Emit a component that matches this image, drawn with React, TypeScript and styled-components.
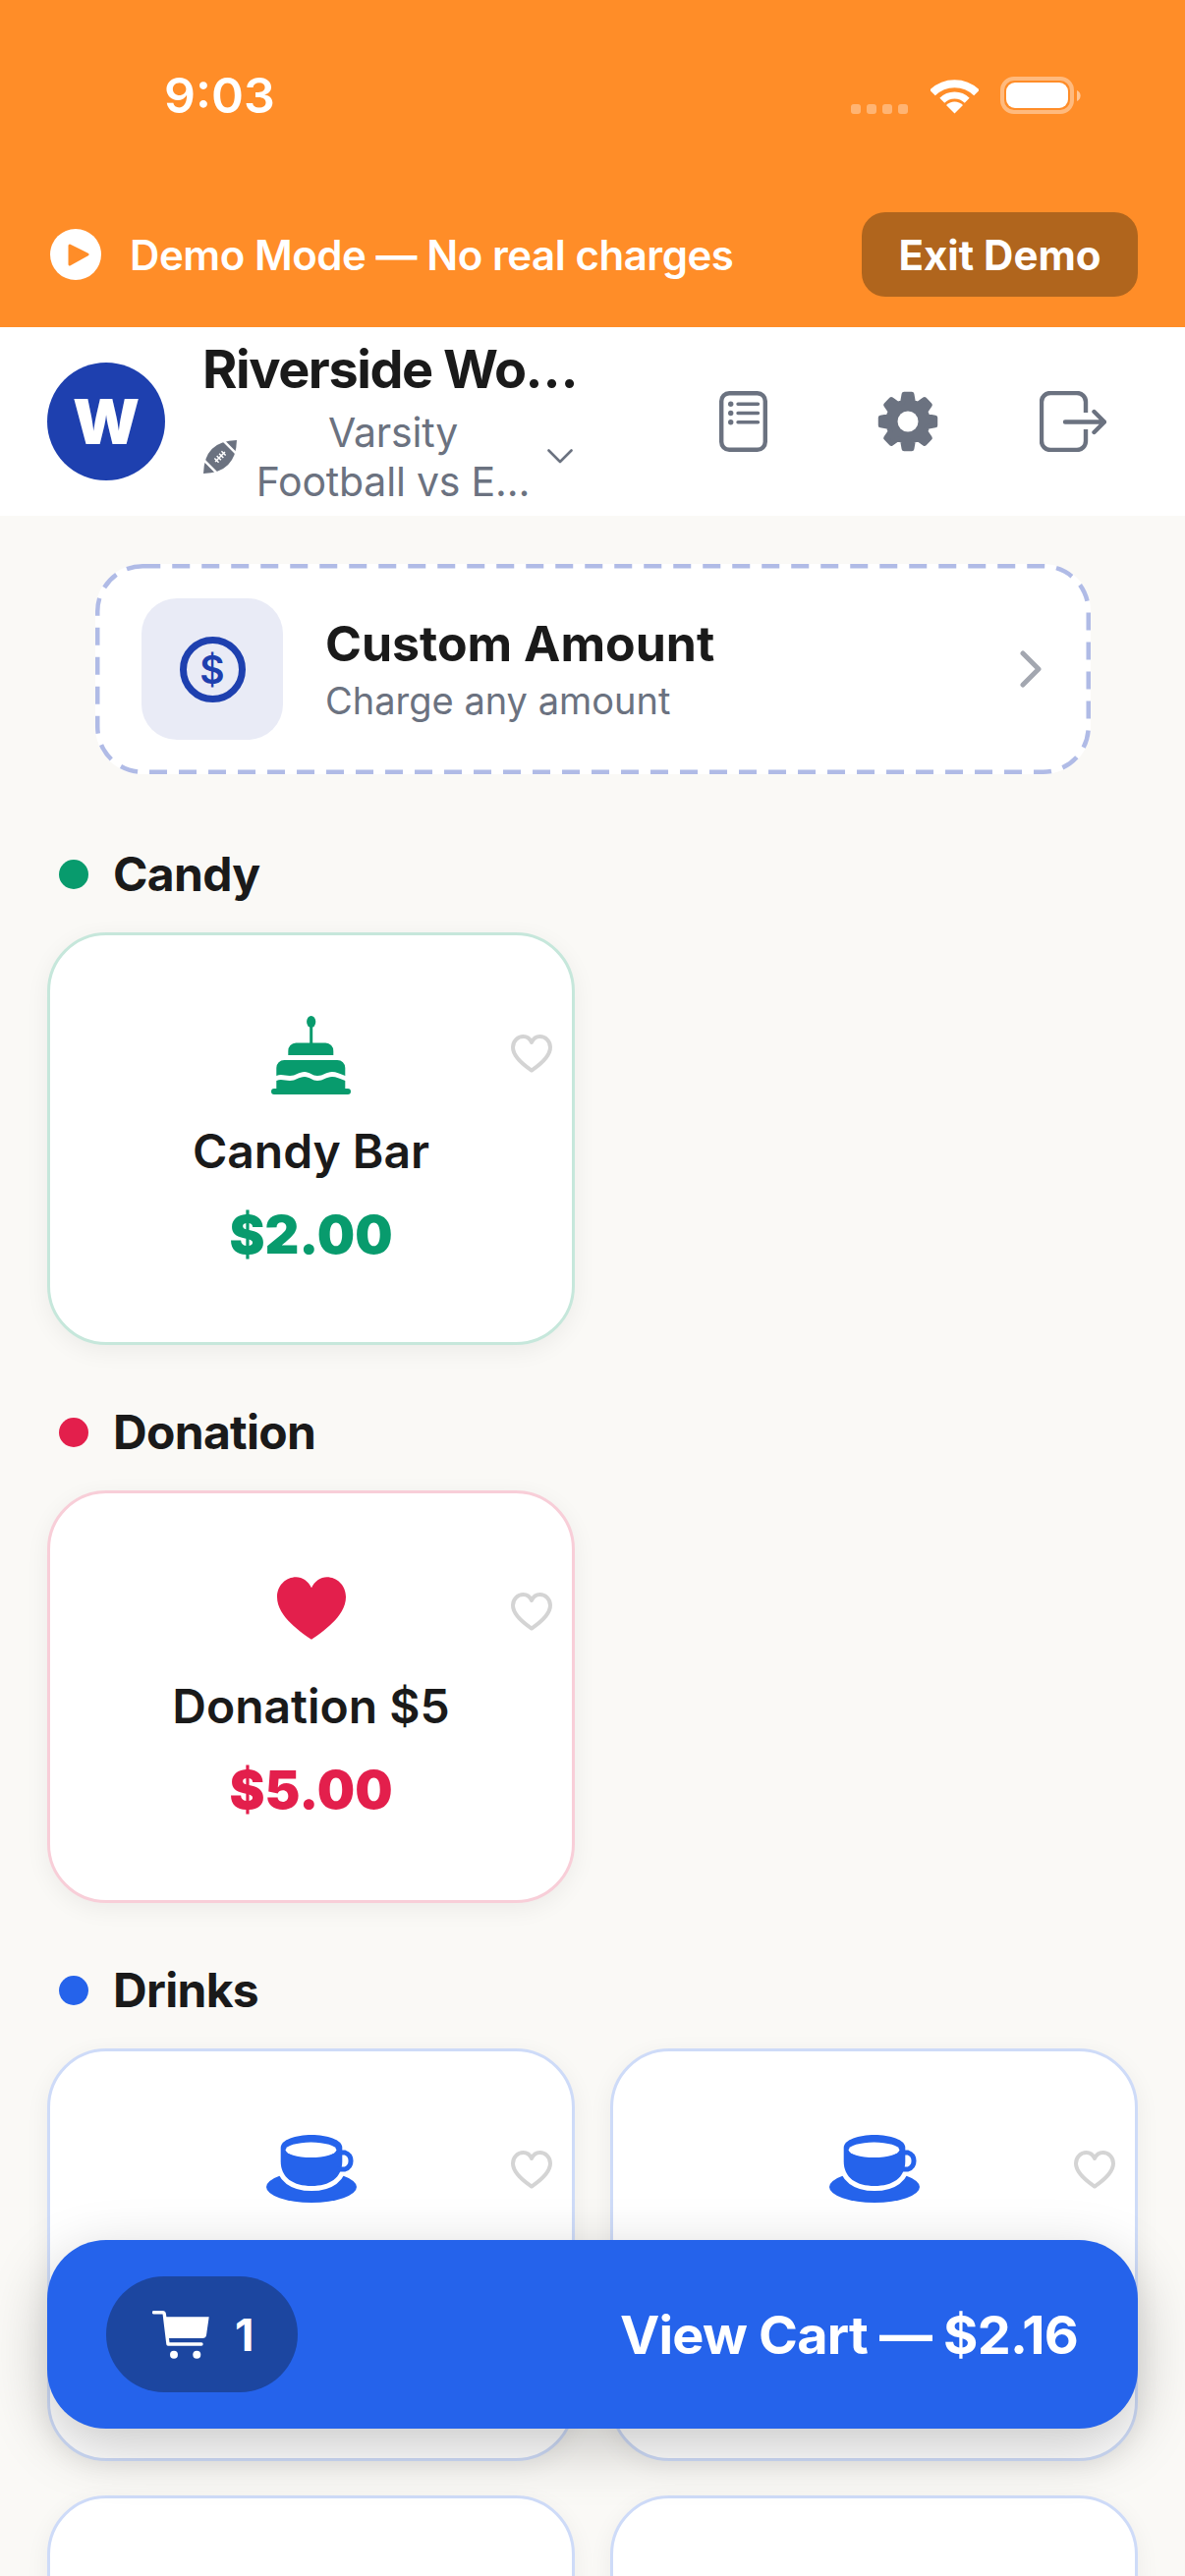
import React from 'react';
import styled, { createGlobalStyle } from 'styled-components';

const GlobalStyle = createGlobalStyle`
  html, body {
    margin: 0;
    padding: 0;
    background: #faf9f6;
    font-family: Inter, "Noto Sans", "Liberation Sans", sans-serif;
    color: #1a1a1a;
  }
  * {
    box-sizing: border-box;
  }
`;

const Screen = styled.div`
  position: relative;
  width: 1206px;
  height: 2622px;
  overflow: hidden;
  background: #faf9f6;
`;

const Banner = styled.div`
  height: 333px;
  padding-top: 71px;
  background: #ff8d28;
  color: #fff;
`;

const StatusRow = styled.div`
  display: flex;
  align-items: center;
  height: 52px;
  padding: 0 106px 0 167px;
`;

const Time = styled.div`
  flex: 1;
  font-size: 50px;
  line-height: 52px;
  font-weight: 600;
`;

const SignalDots = styled.div`
  display: flex;
  gap: 6px;
  align-self: flex-end;
  margin: 0 23px 7px 0;
`;

const SignalDot = styled.span`
  width: 10px;
  height: 10px;
  border-radius: 3px;
  background: rgba(255, 255, 255, 0.35);
`;

const StatusIcons = styled.div`
  display: flex;
  align-items: center;
  gap: 22px;
`;

const DemoRow = styled.div`
  display: flex;
  align-items: center;
  margin-top: 93px;
  padding: 0 48px 0 51px;
`;

const DemoLabel = styled.div`
  flex: 1;
  margin-left: 29px;
  font-size: 42px;
  font-weight: 600;
  letter-spacing: -0.45px;
`;

const ExitButton = styled.div`
  display: flex;
  align-items: center;
  justify-content: center;
  width: 281px;
  height: 86px;
  border-radius: 24px;
  background: #b0651d;
  font-size: 42px;
  font-weight: 700;
`;

const Header = styled.div`
  display: flex;
  align-items: center;
  height: 192px;
  padding: 0 80px 0 48px;
  background: #fff;
`;

const Avatar = styled.div`
  display: flex;
  align-items: center;
  justify-content: center;
  flex: none;
  width: 120px;
  height: 120px;
  border-radius: 50%;
  background: #1e40af;
  color: #fff;
  font-size: 63px;
  font-weight: 900;
`;

const TitleBlock = styled.div`
  width: 377px;
  margin-left: 38px;
`;

const OrgName = styled.div`
  font-size: 54px;
  line-height: 64px;
  font-weight: 700;
  letter-spacing: -1.45px;
  white-space: nowrap;
  margin-bottom: 7px;
`;

const GameRow = styled.div`
  display: flex;
  align-items: center;
`;

const GameName = styled.div`
  flex: 1;
  margin: 0 11px 0 12px;
  text-align: center;
  font-size: 41px;
  line-height: 50px;
  letter-spacing: -0.2px;
  color: #6b7280;
`;

const Actions = styled.div`
  display: flex;
  gap: 100px;
  margin-left: auto;
`;

const ActionButton = styled.div`
  display: flex;
  align-items: center;
  justify-content: center;
  width: 68px;
  height: 64px;
`;

const Body = styled.div`
  padding: 49px 48px 0;
`;

const CustomCard = styled.div`
  position: relative;
  display: flex;
  align-items: center;
  height: 214px;
  margin: 0 48px 72px 49px;
  padding: 0 48px 0 47px;
  border-radius: 48px;
  background: #fff;
`;

const DashedOutline = styled.svg`
  position: absolute;
  inset: 0;
`;

const CustomIconBox = styled.div`
  display: flex;
  align-items: center;
  justify-content: center;
  flex: none;
  width: 144px;
  height: 144px;
  border-radius: 36px;
  background: #e9ebf6;
`;

const Coin = styled.div`
  display: flex;
  align-items: center;
  justify-content: center;
  width: 67px;
  height: 67px;
  border: 7px solid #1e40af;
  border-radius: 50%;
  color: #1e40af;
  font-size: 39px;
  font-weight: 600;
`;

const CustomText = styled.div`
  flex: 1;
  margin-left: 43px;
`;

const CustomTitle = styled.div`
  font-size: 50px;
  line-height: 58px;
  font-weight: 700;
`;

const CustomSubtitle = styled.div`
  margin-top: 6px;
  font-size: 38px;
  line-height: 47px;
  color: #6b7280;
`;

const Section = styled.section`
  margin-bottom: 59px;
`;

const SectionHeader = styled.div`
  display: flex;
  align-items: center;
  margin-bottom: 30px;
  padding-left: 12px;
  font-size: 48px;
  line-height: 59px;
  font-weight: 700;
  letter-spacing: -0.7px;
`;

const Dot = styled.span<{ $color: string }>`
  width: 30px;
  height: 30px;
  margin-right: 25px;
  border-radius: 50%;
  background: ${props => props.$color};
`;

const ItemGrid = styled.div`
  display: grid;
  grid-template-columns: 537px 537px;
  column-gap: 36px;
  row-gap: 35px;
`;

const ItemCard = styled.div<{ $border: string }>`
  position: relative;
  display: flex;
  flex-direction: column;
  align-items: center;
  height: 420px;
  padding-top: 82px;
  border: 3px solid ${props => props.$border};
  border-radius: 60px;
  background: #fff;
  box-shadow: 0 6px 24px rgba(0, 0, 0, 0.06);
`;

const FavoriteIcon = styled.svg`
  position: absolute;
  top: 101px;
  right: 20px;
`;

const IconSlot = styled.div<{ $height: number; $top: number }>`
  display: flex;
  justify-content: center;
  height: ${props => props.$height}px;
  padding-top: ${props => props.$top}px;
`;

const ItemName = styled.div`
  font-size: 48px;
  line-height: 58px;
  font-weight: 600;
`;

const ItemPrice = styled.div<{ $color: string }>`
  margin-top: 24px;
  font-size: 54px;
  line-height: 64px;
  font-weight: 900;
  color: ${props => props.$color};
`;

const CartBar = styled.div`
  position: absolute;
  left: 48px;
  top: 2280px;
  display: flex;
  align-items: center;
  justify-content: space-between;
  width: 1110px;
  height: 192px;
  padding: 0 61px 0 60px;
  border-radius: 60px;
  background: #2563eb;
  color: #fff;
  box-shadow: 0 18px 60px rgba(0, 0, 0, 0.22);
`;

const CartPill = styled.div`
  display: flex;
  align-items: center;
  gap: 26px;
  width: 195px;
  height: 118px;
  padding-left: 47px;
  border-radius: 59px;
  background: #1c46a0;
  font-size: 45px;
  font-weight: 700;
`;

const CartLabel = styled.div`
  font-size: 54px;
  font-weight: 700;
  letter-spacing: -0.8px;
`;

const HEART =
  'M21 36.5C16 33 2 24 2 13 2 6.5 7 2 12.5 2 16 2 19.5 4.5 21 8 22.5 4.5 26 2 29.5 2 35 2 40 6.5 40 13 40 24 26 33 21 36.5Z';

const Wifi = () => (
  <svg width="49" height="37" viewBox="0 0 49 37" fill="none" stroke="#fff">
    <path d="M2 13.4A32 32 0 0 1 47 13.4" strokeWidth="8" transform="translate(0 2)" />
    <path d="M11.8 23.3A18 18 0 0 1 37.2 23.3" strokeWidth="7" />
    <path d="M24.5 36.5L16 28A12 12 0 0 1 33 28Z" fill="#fff" stroke="none" />
  </svg>
);

const Battery = () => (
  <svg width="82" height="38" viewBox="0 0 82 38">
    <rect x="2" y="2" width="71" height="34" rx="12" fill="none" stroke="#fff" strokeOpacity="0.4" strokeWidth="4" />
    <rect x="6" y="6" width="63" height="26" rx="9" fill="#fff" />
    <path d="M78 14a6 6 0 0 1 0 11z" fill="#fff" fillOpacity="0.5" />
  </svg>
);

const PlayBadge = () => (
  <svg width="52" height="52" viewBox="0 0 52 52">
    <circle cx="26" cy="26" r="26" fill="#fff" />
    <path d="M20 17L38 26 20 36Z" fill="#ff8d28" stroke="#ff8d28" strokeWidth="3" strokeLinejoin="round" />
  </svg>
);

const Football = () => (
  <svg width="36" height="36" viewBox="-18 -18 36 36">
    <g transform="rotate(-45)">
      <path d="M-24 0Q0-23 24 0 0 23-24 0Z" fill="#6b7280" />
      <path d="M-14-12V12M14-12V12" stroke="#fff" strokeWidth="2.5" />
      <path d="M-7 0H7M-5-3V3M-1.7-3V3M1.7-3V3M5-3V3" stroke="#fff" strokeWidth="1.5" />
    </g>
  </svg>
);

const ChevronDown = () => (
  <svg width="26" height="15" viewBox="0 0 26 15" fill="none">
    <path d="M1.5 1.5L13 13 24.5 1.5" stroke="#6b7280" strokeWidth="2.6" strokeLinecap="round" strokeLinejoin="round" />
  </svg>
);

const ListIcon = () => (
  <svg width="49" height="62" viewBox="0 0 49 62" fill="none" stroke="#6b7280">
    <rect x="2.2" y="2.2" width="44.6" height="57.6" rx="8" strokeWidth="4.4" />
    <path d="M19 13.3H39.5M19 22.5H39.5M19 31.8H39.5" strokeWidth="3.4" strokeLinecap="round" />
    <circle cx="11.7" cy="13.3" r="2.7" fill="#6b7280" stroke="none" />
    <circle cx="11.7" cy="22.5" r="2.7" fill="#6b7280" stroke="none" />
    <circle cx="11.7" cy="31.8" r="2.7" fill="#6b7280" stroke="none" />
  </svg>
);

const gearPath = () => {
  const points: string[] = [];
  const at = (r: number, deg: number) => {
    const a = (deg * Math.PI) / 180;
    return `${(31 + r * Math.sin(a)).toFixed(2)} ${(31 - r * Math.cos(a)).toFixed(2)}`;
  };
  for (let i = 0; i < 8; i++) {
    const c = i * 45;
    points.push(at(20.5, c - 15), at(28, c - 8), at(28, c + 8), at(20.5, c + 15));
  }
  return `M${points.join('L')}Z`;
};

const GearIcon = () => (
  <svg width="62" height="62" viewBox="0 0 62 62">
    <path d={gearPath()} fill="#6b7280" stroke="#6b7280" strokeWidth="5" strokeLinejoin="round" />
    <circle cx="31" cy="31" r="10.5" fill="#fff" />
  </svg>
);

const LogoutIcon = () => (
  <svg width="68" height="62" viewBox="0 0 68 62" fill="none" stroke="#6b7280" strokeWidth="4.4" strokeLinecap="round" strokeLinejoin="round">
    <path d="M47 22V11a9 9 0 0 0-9-9H11a9 9 0 0 0-9 9V51a9 9 0 0 0 9 9H38a9 9 0 0 0 9-9V39" strokeLinecap="butt" />
    <path d="M26 31.5H65M55.5 21L66 31.5 55.5 42" />
  </svg>
);

const ChevronRight = () => (
  <svg width="26" height="38" viewBox="0 0 26 38" fill="none">
    <path d="M5 3L21 19 5 35" stroke="#a3a7b0" strokeWidth="5" strokeLinecap="round" strokeLinejoin="round" />
  </svg>
);

const Cake = ({ color }: { color: string }) => (
  <svg width="81" height="80" viewBox="0 0 81 80" fill={color}>
    <ellipse cx="40.7" cy="6" rx="4.6" ry="6" />
    <rect x="39.2" y="10" width="3" height="18" />
    <path d="M17.3 40V36a8 8 0 0 1 8-8.5H55.3a8 8 0 0 1 8 8.5V40Z" />
    <path d="M5.3 61V53a8 8 0 0 1 8-8H67.3a8 8 0 0 1 8 8V61C70 59 66 57 62 57 56 57 53 61 47 61 42 61 39 57 34 57 28 57 25 61 19 61 14 61 10 59 5.3 61Z" />
    <path d="M5.3 66C10 64 14 66 19 66 25 66 28 62 34 62 39 62 42 66 47 66 53 66 56 62 62 62 66 62 70 64 75.3 66V74H78a3 3 0 0 1 0 6H3a3 3 0 0 1 0-6H5.3Z" />
  </svg>
);

const HeartFilled = ({ color }: { color: string }) => (
  <svg width="70" height="65" viewBox="2 2 38 35">
    <path d={HEART} fill={color} />
  </svg>
);

const Cup = ({ color }: { color: string }) => (
  <svg width="92" height="69" viewBox="0 0 92 69">
    <ellipse cx="46" cy="53" rx="46" ry="16" fill={color} />
    <path d="M14.7 13C14.7 5 30 0 46 0S77.3 5 77.3 13V27C77.3 44 64 52 46 52S14.7 44 14.7 27Z" fill={color} stroke="#fff" strokeWidth="10" paintOrder="stroke" />
    <path d="M76 18H80A9 9 0 0 1 80 35H72" fill="none" stroke={color} strokeWidth="5" />
    <ellipse cx="45.5" cy="15.3" rx="25.8" ry="7.7" fill="#fff" />
  </svg>
);

const CartIcon = () => (
  <svg width="58" height="49" viewBox="0 0 58 49" fill="#fff">
    <path d="M1.5 1.7H10.5Q12 1.7 12.3 3.5L16 34H50" fill="none" stroke="#fff" strokeWidth="3.4" strokeLinecap="round" strokeLinejoin="round" />
    <path d="M12.3 6.3H57.7L55 25Q54.5 28 51 28H15Z" />
    <circle cx="22" cy="44.7" r="4" />
    <circle cx="45.3" cy="44.7" r="4" />
  </svg>
);

const HeartOutline = () => (
  <FavoriteIcon width="42" height="39" viewBox="0 0 42 39" fill="none">
    <path d={HEART} stroke="#d4d4d4" strokeWidth="4" strokeLinejoin="round" />
  </FavoriteIcon>
);

const GREEN = '#089b6d';
const PINK = '#e31f4c';
const BLUE = '#2563eb';

export default function App() {
  return (
    <Screen>
      <GlobalStyle />
      <Banner>
        <StatusRow>
          <Time>9:03</Time>
          <SignalDots>
            <SignalDot />
            <SignalDot />
            <SignalDot />
            <SignalDot />
          </SignalDots>
          <StatusIcons>
            <Wifi />
            <Battery />
          </StatusIcons>
        </StatusRow>
        <DemoRow>
          <PlayBadge />
          <DemoLabel>Demo Mode — No real charges</DemoLabel>
          <ExitButton>Exit Demo</ExitButton>
        </DemoRow>
      </Banner>

      <Header>
        <Avatar>W</Avatar>
        <TitleBlock>
          <OrgName>Riverside Wo…</OrgName>
          <GameRow>
            <Football />
            <GameName>
              Varsity
              <br />
              Football vs E…
            </GameName>
            <ChevronDown />
          </GameRow>
        </TitleBlock>
        <Actions>
          <ActionButton>
            <ListIcon />
          </ActionButton>
          <ActionButton>
            <GearIcon />
          </ActionButton>
          <ActionButton>
            <LogoutIcon />
          </ActionButton>
        </Actions>
      </Header>

      <Body>
        <CustomCard>
          <DashedOutline width="1013" height="214" viewBox="0 0 1013 214" fill="none">
            <rect x="2.25" y="2.25" width="1008.5" height="209.5" rx="46" stroke="#b0bbe6" strokeWidth="4.5" strokeDasharray="18 12" />
          </DashedOutline>
          <CustomIconBox>
            <Coin>$</Coin>
          </CustomIconBox>
          <CustomText>
            <CustomTitle>Custom Amount</CustomTitle>
            <CustomSubtitle>Charge any amount</CustomSubtitle>
          </CustomText>
          <ChevronRight />
        </CustomCard>

        <Section>
          <SectionHeader>
            <Dot $color={GREEN} />
            Candy
          </SectionHeader>
          <ItemGrid>
            <ItemCard $border="#c6e7db">
              <IconSlot $height={109} $top={0}>
                <Cake color={GREEN} />
              </IconSlot>
              <HeartOutline />
              <ItemName>Candy Bar</ItemName>
              <ItemPrice $color={GREEN}>$2.00</ItemPrice>
            </ItemCard>
          </ItemGrid>
        </Section>

        <Section>
          <SectionHeader>
            <Dot $color={PINK} />
            Donation
          </SectionHeader>
          <ItemGrid>
            <ItemCard $border="#f8ced8">
              <IconSlot $height={106} $top={3}>
                <HeartFilled color={PINK} />
              </IconSlot>
              <HeartOutline />
              <ItemName>Donation $5</ItemName>
              <ItemPrice $color={PINK}>$5.00</ItemPrice>
            </ItemCard>
          </ItemGrid>
        </Section>

        <Section>
          <SectionHeader>
            <Dot $color={BLUE} />
            Drinks
          </SectionHeader>
          <ItemGrid>
            <ItemCard $border="#cedbf8">
              <IconSlot $height={106} $top={3}>
                <Cup color={BLUE} />
              </IconSlot>
              <HeartOutline />
            </ItemCard>
            <ItemCard $border="#cedbf8">
              <IconSlot $height={106} $top={3}>
                <Cup color={BLUE} />
              </IconSlot>
              <HeartOutline />
            </ItemCard>
            <ItemCard $border="#cedbf8" />
            <ItemCard $border="#cedbf8" />
          </ItemGrid>
        </Section>
      </Body>

      <CartBar>
        <CartPill>
          <CartIcon />1
        </CartPill>
        <CartLabel>View Cart — $2.16</CartLabel>
      </CartBar>
    </Screen>
  );
}
